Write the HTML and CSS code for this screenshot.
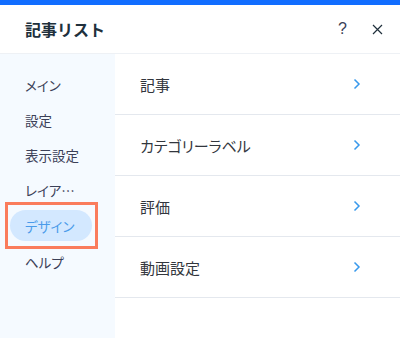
FILE: index.html
```html
<!DOCTYPE html>
<html lang="ja">
<head>
  <meta charset="UTF-8" />
  <title>記事リスト</title>
  <meta name="viewport" content="width=device-width, initial-scale=1.0" />
  <link rel="stylesheet" href="styles.css">
</head>
<body>
  <div class="topbar"></div>
  <header class="header">
    <h1>記事リスト</h1>
    <div class="actions">
      <span class="help">?</span>
      <svg class="close" width="11" height="11" viewBox="0 0 11 11"><path d="M1 1L10 10M10 1L1 10" stroke="#20303c" stroke-width="1.2" fill="none"/></svg>
    </div>
  </header>
  <div class="panel">
    <nav class="side">
      <div class="side-item">メイン</div>
      <div class="side-item">設定</div>
      <div class="side-item">表示設定</div>
      <div class="side-item">レイア…</div>
      <div class="side-item active"><span class="pill">デザイン</span><span class="mark"></span></div>
      <div class="side-item">ヘルプ</div>
    </nav>
    <main class="list">
      <div class="row"><span>記事</span><svg width="8" height="12" viewBox="0 0 8 12"><path d="M1.5 1.5L6 6L1.5 10.5" stroke="#3899ec" stroke-width="1.5" fill="none"/></svg></div>
      <div class="row"><span>カテゴリーラベル</span><svg width="8" height="12" viewBox="0 0 8 12"><path d="M1.5 1.5L6 6L1.5 10.5" stroke="#3899ec" stroke-width="1.5" fill="none"/></svg></div>
      <div class="row"><span>評価</span><svg width="8" height="12" viewBox="0 0 8 12"><path d="M1.5 1.5L6 6L1.5 10.5" stroke="#3899ec" stroke-width="1.5" fill="none"/></svg></div>
      <div class="row"><span>動画設定</span><svg width="8" height="12" viewBox="0 0 8 12"><path d="M1.5 1.5L6 6L1.5 10.5" stroke="#3899ec" stroke-width="1.5" fill="none"/></svg></div>
    </main>
  </div>
</body>
</html>
```

FILE: styles.css
```css
body {
  margin: 0;
  font-family: "Noto Sans CJK JP", "Noto Sans", sans-serif;
  background: #fff;
  color: #32363d;
  width: 400px;
  height: 338px;
  overflow: hidden;
}
.topbar {
  height: 5px;
  background: #116dff;
}
.header {
  height: 48px;
  display: flex;
  align-items: center;
  justify-content: space-between;
  padding: 0 17px 0 25px;
  border-bottom: 1px solid #eef1f5;
}
.header h1 {
  margin: 0;
  font-size: 16px;
  font-weight: bold;
  color: #20303c;
}
.actions {
  display: flex;
  align-items: center;
  gap: 25px;
}
.help {
  font-family: "Liberation Sans", sans-serif;
  font-size: 16px;
  color: #3b4057;
}
.panel {
  display: flex;
  height: 284px;
}
.side {
  width: 115px;
  background: #f5faff;
  padding-top: 13px;
  box-sizing: border-box;
}
.side-item {
  height: 35px;
  display: flex;
  align-items: center;
  padding-left: 25px;
  font-size: 13.5px;
  color: #3b4057;
  position: relative;
  font-feature-settings: "palt";
}
.side-item.active {
  padding-left: 10px;
  height: 37px;
}
.pill {
  background: #d3e8ff;
  color: #4a9bea;
  border-radius: 16px;
  height: 31px;
  width: 82px;
  box-sizing: border-box;
  padding-left: 15px;
  display: flex;
  align-items: center;
}
.mark {
  position: absolute;
  left: 5px;
  top: -5px;
  width: 87px;
  height: 41px;
  border: 3px solid #fa7c5c;
}
.list {
  flex: 1;
}
.row {
  height: 60px;
  border-bottom: 1px solid #e4e8ee;
  display: flex;
  align-items: center;
  justify-content: space-between;
  padding: 0 39px 0 25px;
  font-size: 15px;
  color: #32363d;
  font-feature-settings: "palt";
}
```
